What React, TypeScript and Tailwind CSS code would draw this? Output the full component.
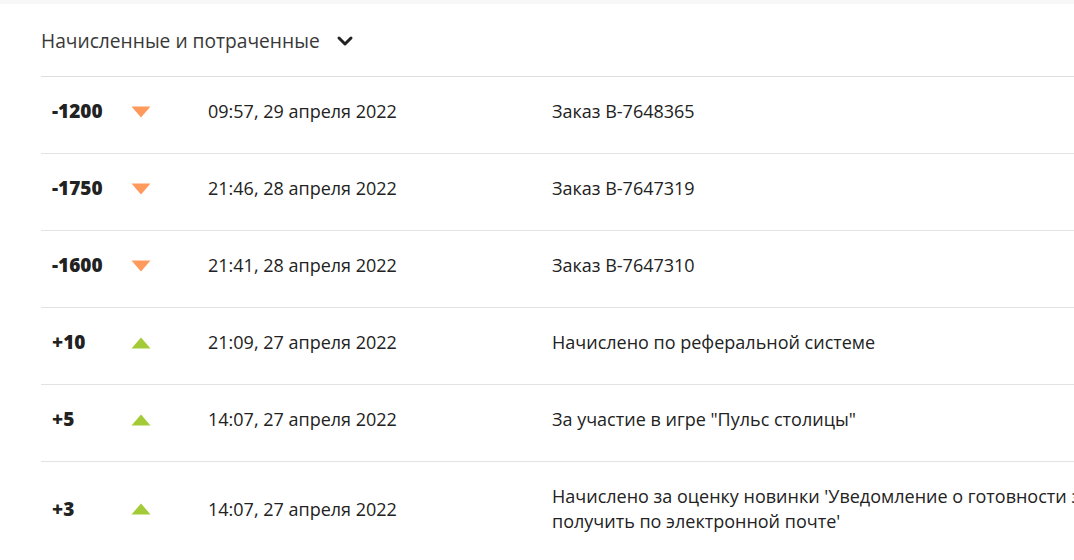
import React from 'react';
import { ChevronDown } from 'lucide-react';

type Entry = {
  amount: string;
  date: string;
  text: string;
};

const entries: Entry[] = [
  { amount: '-1200', date: '09:57, 29 апреля 2022', text: 'Заказ B-7648365' },
  { amount: '-1750', date: '21:46, 28 апреля 2022', text: 'Заказ B-7647319' },
  { amount: '-1600', date: '21:41, 28 апреля 2022', text: 'Заказ B-7647310' },
  { amount: '+10', date: '21:09, 27 апреля 2022', text: 'Начислено по реферальной системе' },
  { amount: '+5', date: '14:07, 27 апреля 2022', text: 'За участие в игре "Пульс столицы"' },
  {
    amount: '+3',
    date: '14:07, 27 апреля 2022',
    text: "Начислено за оценку новинки 'Уведомление о готовности заказа можно получить по электронной почте'",
  },
];

const Arrow = ({ up }: { up: boolean }) =>
  up ? (
    <svg width="20" height="12" viewBox="0 0 20 12" className="block">
      <path d="M10 0.5 L19.5 11.5 L0.5 11.5 Z" fill="#a3cb38" />
    </svg>
  ) : (
    <svg width="20" height="12" viewBox="0 0 20 12" className="block">
      <path d="M0.5 0.5 L19.5 0.5 L10 11.5 Z" fill="#ff9a5c" />
    </svg>
  );

const App = () => {
  return (
    <div className="w-full min-h-[560px] bg-white overflow-hidden font-['Open_Sans',sans-serif] text-[#222]">
      <div className="h-[4px] bg-[#f7f7f7]" />
      <div className="pl-[41px] w-[1400px]">
        <div className="flex items-center pt-[24px] pb-[23px] border-b border-[#dedede]">
          <span className="text-[19.2px] leading-[25px] text-[#383838]">Начисленные и потраченные</span>
          <ChevronDown size={24} strokeWidth={3} className="ml-[13px] text-[#222]" />
        </div>

        {entries.map((e, i) => (
          <div
            key={i}
            className="flex items-center pt-[22px] pb-[29px] border-b border-[#e3e3e3] text-[18px] leading-[25px]"
          >
            <div className="w-[79px] pl-[11px] box-content text-[19px] font-extrabold">{e.amount}</div>
            <div className="w-[77px]">
              <Arrow up={e.amount.startsWith('+')} />
            </div>
            <div className="w-[344px]">{e.date}</div>
            <div className="w-[680px]">{e.text}</div>
          </div>
        ))}
      </div>
    </div>
  );
};

export default App;
